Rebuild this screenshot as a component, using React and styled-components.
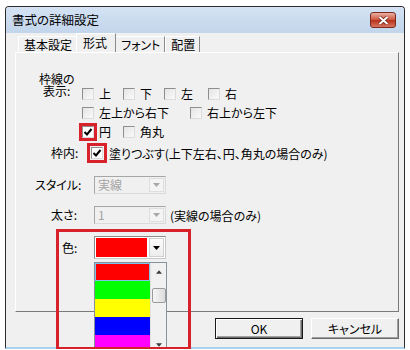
import React from "react";
import styled, { createGlobalStyle } from "styled-components";

const GlobalStyle = createGlobalStyle`
  html, body {
    margin: 0;
    padding: 0;
    background: #fff;
  }
  body {
    font-family: "Noto Sans CJK JP", "Noto Sans", sans-serif;
    font-size: 12px;
    color: #000;
    font-feature-settings: "palt";
  }
`;

const Window = styled.div`
  margin: 6px 0 0 5px;
  width: 400px;
  height: 343px;
  box-sizing: border-box;
  border: 1px solid #2c2c2c;
  border-bottom: 2px solid #a9d2f0;
  border-radius: 4px 4px 0 0;
  background: #f0f0f0;
  display: flex;
  flex-direction: column;
`;

const TitleBar = styled.div`
  height: 26px;
  flex: none;
  display: flex;
  align-items: center;
  justify-content: space-between;
  padding: 0 8px 0 6px;
  background: linear-gradient(#d4e2f3, #c3d5eb);
  border-radius: 3px 3px 0 0;
`;

const Title = styled.span`
  font-size: 12.5px;
  line-height: 1;
`;

const CloseButton = styled.div`
  width: 24px;
  height: 14px;
  border-radius: 3px;
  border: 1px solid #7b2a20;
  background: linear-gradient(#eab0a4, #d0583f 48%, #b7321c 52%, #d9755f);
  display: flex;
  align-items: center;
  justify-content: center;
`;

const TabStrip = styled.div`
  height: 19px;
  flex: none;
  display: flex;
  align-items: flex-end;
  padding-left: 12px;
`;

const Tab = styled.div`
  height: ${(p) => (p.$active ? 19 : 16)}px;
  box-sizing: border-box;
  padding: ${(p) => (p.$active ? "2px 8px 0 6px" : "1px 4px 0 5px")};
  margin: ${(p) => (p.$active ? "0 -1px" : "0")};
  border: 1px solid;
  border-color: #fff #8a8a8a transparent #fff;
  border-bottom: none;
  background: #f0f0f0;
  white-space: nowrap;
  line-height: 14px;
  position: relative;
  z-index: ${(p) => (p.$active ? 1 : 0)};
`;

const Panel = styled.div`
  margin: 0 5px 0 9px;
  height: 260px;
  flex: none;
  box-sizing: border-box;
  border: 1px solid;
  border-color: #fff #7a7a7a #7a7a7a #fff;
  padding-top: 19px;
`;

const Row = styled.div`
  position: relative;
  display: flex;
  align-items: ${(p) => p.$align || "center"};
  height: ${(p) => p.$h}px;
  margin-top: ${(p) => p.$mt || 0}px;
`;

const Label = styled.div`
  flex: none;
  width: ${(p) => p.$w}px;
  padding-left: ${(p) => p.$pl}px;
  margin-top: ${(p) => p.$mt || 0}px;
  box-sizing: border-box;
  white-space: nowrap;
  line-height: 14px;
`;

/* two-line label: wraps after 枠線の, second line indented */
const WrapLabel = styled.div`
  flex: none;
  width: 43px;
  margin: 0 ${(p) => p.$after}px 0 ${(p) => p.$pl}px;
  padding-left: 4px;
  text-indent: -4px;
  box-sizing: border-box;
  line-height: 12px;
  padding-top: 1px;
`;

const CheckColumn = styled.div`
  padding-top: 12px;
  display: flex;
  flex-direction: column;
`;

const CheckLine = styled.div`
  height: 19px;
  display: flex;
  align-items: center;
`;

const Check = styled.div`
  flex: none;
  width: ${(p) => (p.$w ? `${p.$w}px` : "auto")};
  display: flex;
  align-items: center;
  gap: ${(p) => p.$gap || 5}px;
  white-space: nowrap;
`;

const Box = styled.span`
  width: 12px;
  height: 12px;
  flex: none;
  box-sizing: border-box;
  border: 1px solid;
  border-color: #8e8e8e #dcdcdc #dcdcdc #8e8e8e;
  background: ${(p) =>
    p.$checked ? "#fff" : "linear-gradient(135deg, #e4e4e4, #fafafa)"};
  display: flex;
  align-items: center;
  justify-content: center;
  outline: ${(p) => (p.$marked ? "3px solid #d8222b" : "none")};
  outline-offset: ${(p) => p.$offset || 0}px;
`;

const Combo = styled.div`
  width: 72px;
  height: ${(p) => p.$h}px;
  flex: none;
  box-sizing: border-box;
  display: flex;
  padding: 1px;
  border: 1px solid;
  border-color: ${(p) =>
    p.$disabled ? "#a6a6a6 #dadada #dadada #a6a6a6" : "#8a8a8a #c8c8c8 #c8c8c8 #8a8a8a"};
  background: ${(p) => (p.$disabled ? "#f0f0f0" : "#fff")};
`;

const ComboText = styled.div`
  flex: 1;
  padding-left: 2px;
  color: #a3a3a3;
  line-height: 14px;
`;

const Swatch = styled.div`
  flex: 1;
  margin-right: 2px;
  background: ${(p) => p.$color};
`;

const ComboArrow = styled.div`
  width: 15px;
  flex: none;
  box-sizing: border-box;
  border: 1px solid ${(p) => (p.$disabled ? "#dedede" : "#d0d0d0")};
  background: ${(p) => (p.$disabled ? "#f4f4f4" : "linear-gradient(#fcfcfc, #ececec)")};
  display: flex;
  align-items: center;
  justify-content: center;
`;

const Note = styled.span`
  margin-left: 4px;
  white-space: nowrap;
`;

const DropList = styled.div`
  position: absolute;
  left: 78px;
  top: 26px;
  width: 73px;
  height: 92px;
  box-sizing: border-box;
  border: 1px solid #8a9099;
  background: #fff;
  display: flex;
  z-index: 2;
`;

const Options = styled.div`
  width: 55px;
  display: flex;
  flex-direction: column;
`;

const Option = styled.div`
  height: 18px;
  flex: none;
  box-sizing: border-box;
  background: ${(p) => p.$color};
  border: ${(p) => (p.$focus ? "1px solid #7fc4e8" : "none")};
`;

const ScrollBar = styled.div`
  flex: 1;
  display: flex;
  flex-direction: column;
  background: #f1f1f1;
  border-left: 1px solid #e2e2e2;
`;

const ScrollButton = styled.div`
  height: 17px;
  flex: none;
  display: flex;
  align-items: center;
  justify-content: center;
`;

const ScrollTrack = styled.div`
  flex: 1;
  padding-top: 8px;
  display: flex;
  justify-content: center;
`;

const Thumb = styled.div`
  width: 14px;
  height: 15px;
  box-sizing: border-box;
  border: 1px solid #9b9b9b;
  border-radius: 2px;
  background: linear-gradient(90deg, #f6f6f6, #dcdcdc);
`;

const Mark = styled.div`
  position: absolute;
  left: 40px;
  top: -7px;
  width: 135px;
  height: 121px;
  box-sizing: border-box;
  border: 3px solid #d8222b;
  pointer-events: none;
  z-index: 3;
`;

const ButtonRow = styled.div`
  display: flex;
  justify-content: flex-end;
  gap: 8px;
  margin: 6px 5px 0 0;
`;

const Button = styled.div`
  width: 88px;
  height: 21px;
  box-sizing: border-box;
  display: flex;
  align-items: center;
  justify-content: center;
  background: #f0f0f0;
  border: 1px solid;
  border-color: ${(p) => (p.$default ? "#1a1a1a" : "#fff #6a6a6a #6a6a6a #fff")};
  box-shadow: ${(p) =>
    p.$default
      ? "inset 1px 1px #fff, inset -1px -1px #6a6a6a, inset -2px -2px #a0a0a0"
      : "inset -1px -1px #a0a0a0"};
`;

const Arrow = ({ dir = "down", color = "#000", w = 7 }) => (
  <svg width={w} height={4} viewBox="0 0 7 4">
    <polygon
      points={dir === "down" ? "0,0 7,0 3.5,4" : "0,4 7,4 3.5,0"}
      fill={color}
    />
  </svg>
);

const Tick = () => (
  <svg width="10" height="10" viewBox="0 0 10 10">
    <path d="M1.5 5 L4 7.5 L8.5 2" fill="none" stroke="#000" strokeWidth="2" />
  </svg>
);

const CheckItem = ({ label, w, checked, marked, offset }) => (
  <Check $w={w}>
    <Box $checked={checked} $marked={marked} $offset={offset}>
      {checked && <Tick />}
    </Box>
    {label}
  </Check>
);

const colors = ["#ff0000", "#00ff00", "#ffff00", "#0000ff", "#ff00ff"];

export default function App() {
  return (
    <>
      <GlobalStyle />
      <Window>
        <TitleBar>
          <Title>書式の詳細設定</Title>
          <CloseButton>
            <svg width="11" height="9" viewBox="0 0 11 9">
              <path
                d="M1.5 1 L9.5 8 M9.5 1 L1.5 8"
                stroke="#6b1f16"
                strokeWidth="3.4"
              />
              <path
                d="M1.5 1 L9.5 8 M9.5 1 L1.5 8"
                stroke="#fff"
                strokeWidth="2"
              />
            </svg>
          </CloseButton>
        </TitleBar>

        <TabStrip>
          <Tab>基本設定</Tab>
          <Tab $active>形式</Tab>
          <Tab>フォント</Tab>
          <Tab>配置</Tab>
        </TabStrip>

        <Panel>
          <Row $h={69} $align="flex-start">
            <WrapLabel $pl={23} $after={0}>
              枠線の表示:
            </WrapLabel>
            <CheckColumn>
              <CheckLine>
                <CheckItem w={41} label="上" />
                <CheckItem w={41} label="下" />
                <CheckItem w={44} label="左" />
                <CheckItem label="右" />
              </CheckLine>
              <CheckLine>
                <CheckItem w={108} label="左上から右下" />
                <CheckItem label="右上から左下" />
              </CheckLine>
              <CheckLine>
                <CheckItem w={41} label="円" checked marked />
                <CheckItem label="角丸" />
              </CheckLine>
            </CheckColumn>
          </Row>

          <Row $h={20} $mt={2}>
            <Label $w={75} $pl={35}>
              枠内:
            </Label>
            <Check $gap={6}>
              <Box $checked $marked $offset={1}>
                <Tick />
              </Box>
              塗りつぶす(上下左右、円、角丸の場合のみ)
            </Check>
          </Row>

          <Row $h={18} $mt={13}>
            <Label $w={78} $pl={19}>
              スタイル:
            </Label>
            <Combo $h={18} $disabled>
              <ComboText>実線</ComboText>
              <ComboArrow $disabled>
                <Arrow color="#a8a8a8" />
              </ComboArrow>
            </Combo>
          </Row>

          <Row $h={18} $mt={12}>
            <Label $w={78} $pl={35}>
              太さ:
            </Label>
            <Combo $h={18} $disabled>
              <ComboText>1</ComboText>
              <ComboArrow $disabled>
                <Arrow color="#a8a8a8" />
              </ComboArrow>
            </Combo>
            <Note>(実線の場合のみ)</Note>
          </Row>

          <Row $h={23} $mt={12}>
            <Label $w={78} $pl={46}>
              色:
            </Label>
            <Combo $h={23}>
              <Swatch $color="#ff0000" />
              <ComboArrow>
                <Arrow />
              </ComboArrow>
            </Combo>
            <DropList>
              <Options>
                {colors.map((c, i) => (
                  <Option key={c} $color={c} $focus={i === 0} />
                ))}
              </Options>
              <ScrollBar>
                <ScrollButton>
                  <Arrow dir="up" color="#3c3c3c" w={6} />
                </ScrollButton>
                <ScrollTrack>
                  <Thumb />
                </ScrollTrack>
                <ScrollButton>
                  <Arrow color="#3c3c3c" w={6} />
                </ScrollButton>
              </ScrollBar>
            </DropList>
            <Mark />
          </Row>
        </Panel>

        <ButtonRow>
          <Button $default>OK</Button>
          <Button>キャンセル</Button>
        </ButtonRow>
      </Window>
    </>
  );
}
